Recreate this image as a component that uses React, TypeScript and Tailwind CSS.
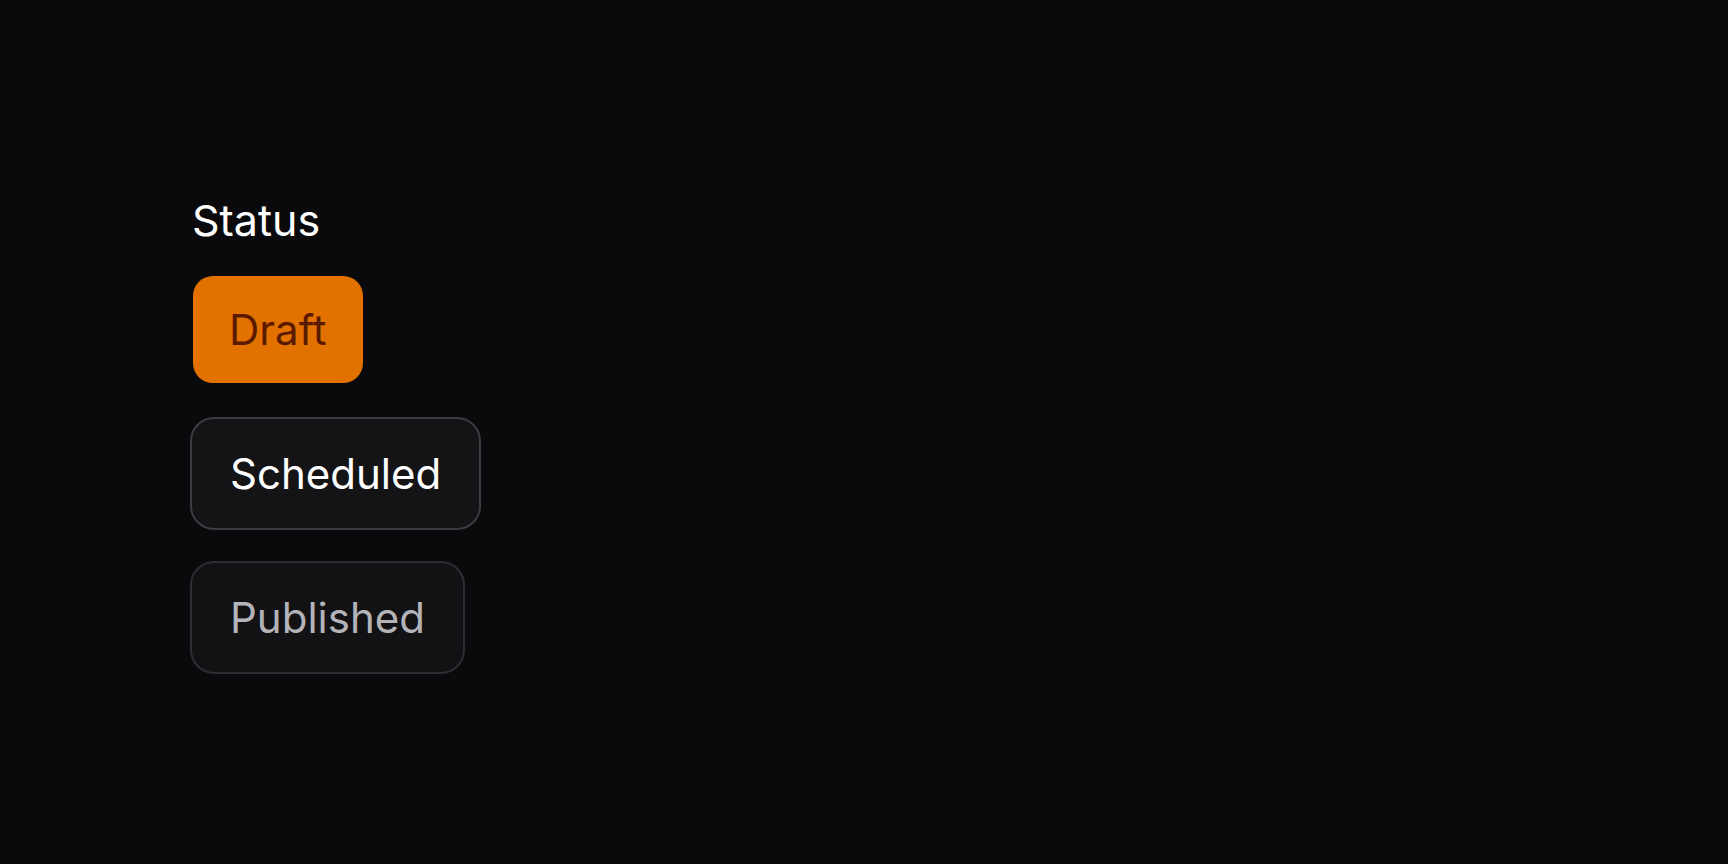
import { useState } from 'react';

const statuses = ['Draft', 'Scheduled', 'Published'] as const;
type Status = (typeof statuses)[number];

export default function App() {
  const [status, setStatus] = useState<Status>('Draft');

  return (
    <div className="min-h-screen w-full bg-[#0a0a0c] font-['Inter',sans-serif]">
      <div className="pl-[190px] pt-[194px]">
        <h2 className="ml-[2px] text-[43px] leading-[52px] text-white">Status</h2>
        <div className="mt-[27px] flex flex-col items-start gap-[31px]">
          {statuses.map((s) => {
            if (s === status) {
              return (
                <button
                  key={s}
                  onClick={() => setStatus(s)}
                  className="m-[3px] h-[107px] rounded-[20px] bg-[#e27100] px-[36px] text-[42px] text-[#5a1a00]"
                >
                  {s}
                </button>
              );
            }
            return (
              <button
                key={s}
                onClick={() => setStatus(s)}
                className={
                  s === 'Scheduled'
                    ? 'h-[113px] rounded-[24px] border-[2.5px] border-[#3c3c40] bg-[#141416] px-[38px] text-[42px] text-white'
                    : 'h-[113px] rounded-[24px] border-[2.5px] border-[#2e2e32] bg-[#121214] px-[38px] text-[42px] text-[#b4b4b8]'
                }
              >
                {s}
              </button>
            );
          })}
        </div>
      </div>
    </div>
  );
}
